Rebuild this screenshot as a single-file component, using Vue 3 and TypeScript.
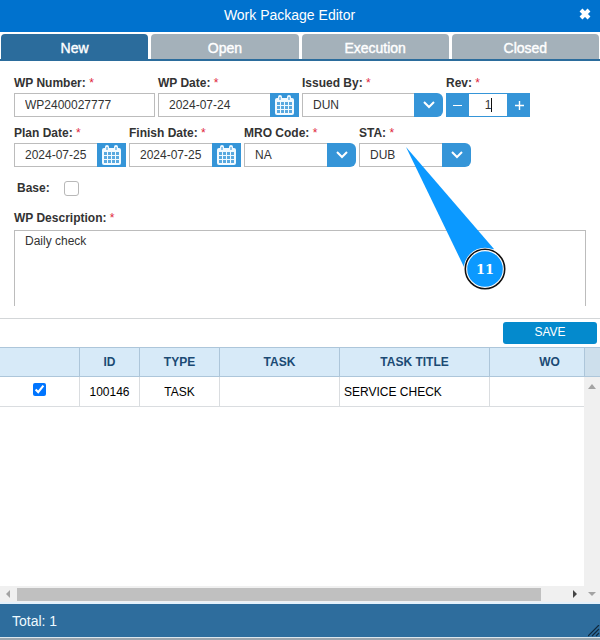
<script setup lang="ts">
import { ref } from 'vue'

interface Field {
  id: string
  label: string
  kind: 'text' | 'date' | 'select' | 'stepper'
  value: string
}

interface Task {
  id: string
  type: string
  task: string
  title: string
  wo: string
  checked: boolean
}

const tabs: string[] = ['New', 'Open', 'Execution', 'Closed']
const activeTab = ref('New')

const rows = ref<Field[][]>([
  [
    { id: 'wp-number', label: 'WP Number:', kind: 'text', value: 'WP2400027777' },
    { id: 'wp-date', label: 'WP Date:', kind: 'date', value: '2024-07-24' },
    { id: 'issued-by', label: 'Issued By:', kind: 'select', value: 'DUN' },
    { id: 'rev', label: 'Rev:', kind: 'stepper', value: '1' },
  ],
  [
    { id: 'plan-date', label: 'Plan Date:', kind: 'date', value: '2024-07-25' },
    { id: 'finish-date', label: 'Finish Date:', kind: 'date', value: '2024-07-25' },
    { id: 'mro-code', label: 'MRO Code:', kind: 'select', value: 'NA' },
    { id: 'sta', label: 'STA:', kind: 'select', value: 'DUB' },
  ],
])

const base = ref(false)
const description = ref('Daily check')

const tasks = ref<Task[]>([
  { id: '100146', type: 'TASK', task: '', title: 'SERVICE CHECK', wo: '', checked: true },
])

function step(field: Field, delta: number): void {
  field.value = String(Math.max(0, Number(field.value) + delta))
}
</script>

<template>
  <main class="editor">
    <header class="titlebar">
      <h1>Work Package Editor</h1>
      <button class="close" type="button" aria-label="Close">
        <svg width="12" height="12" viewBox="0 0 12 12" aria-hidden="true">
          <path d="M2 2L10 10M10 2L2 10" stroke="#fff" stroke-width="4" />
        </svg>
      </button>
    </header>

    <nav class="tabs">
      <button
        v-for="tab in tabs"
        :key="tab"
        type="button"
        class="tab"
        :class="{ active: tab === activeTab }"
        @click="activeTab = tab"
      >{{ tab }}</button>
    </nav>

    <form class="form" @submit.prevent>
      <div v-for="(row, r) in rows" :key="r" class="row" :class="{ compact: r === 1 }">
        <div v-for="field in row" :key="field.id" class="field" :class="field.kind">
          <label :for="field.id">{{ field.label }} <span class="req">*</span></label>
          <div class="control">
            <template v-if="field.kind === 'text'">
              <input :id="field.id" v-model="field.value" type="text" />
            </template>
            <template v-else-if="field.kind === 'date'">
              <input :id="field.id" v-model="field.value" type="text" />
              <button class="addon" type="button" aria-label="Pick date">
                <svg width="19" height="20" viewBox="0 0 19 20" aria-hidden="true">
                  <rect x="0" y="3" width="19" height="17" rx="2" fill="#f2faff" />
                  <rect x="3" y="0" width="4" height="6" rx="2" fill="#f2faff" />
                  <rect x="12" y="0" width="4" height="6" rx="2" fill="#f2faff" />
                  <path d="M5 2V5M14 2V5" stroke="#3595d8" stroke-width="1" />
                  <g fill="#5aa9df">
                    <template v-for="y in 3" :key="y">
                      <rect v-for="x in 4" :key="x" :x="x * 4 - 2" :y="y * 4 + 3" width="3" height="3" />
                    </template>
                  </g>
                </svg>
              </button>
            </template>
            <template v-else-if="field.kind === 'select'">
              <select :id="field.id" v-model="field.value">
                <option :value="field.value">{{ field.value }}</option>
              </select>
              <span class="addon arrow">
                <svg width="12" height="8" viewBox="0 0 12 8" aria-hidden="true">
                  <path d="M1 1L6 6L11 1" fill="none" stroke="#fff" stroke-width="2" />
                </svg>
              </span>
            </template>
            <template v-else>
              <button class="step" type="button" aria-label="Decrease" @click="step(field, -1)">
                <svg width="9" height="9" viewBox="0 0 9 9" aria-hidden="true">
                  <path d="M0 4.5H9" stroke="#fff" />
                </svg>
              </button>
              <input :id="field.id" v-model="field.value" type="text" />
              <span class="caret"></span>
              <button class="step" type="button" aria-label="Increase" @click="step(field, 1)">
                <svg width="9" height="9" viewBox="0 0 9 9" aria-hidden="true">
                  <path d="M0 4.5H9M4.5 0V9" stroke="#fff" stroke-width="1.4" />
                </svg>
              </button>
            </template>
          </div>
        </div>
      </div>

      <div class="base">
        <label for="base">Base:</label>
        <input id="base" v-model="base" type="checkbox" />
      </div>

      <div class="description">
        <label for="description">WP Description: <span class="req">*</span></label>
        <textarea id="description" v-model="description"></textarea>
      </div>
    </form>

    <div class="actions">
      <button class="save" type="button">SAVE</button>
    </div>

    <section class="grid">
      <div class="grid-body">
        <div class="viewport">
          <table>
            <colgroup>
              <col class="c-check" />
              <col class="c-id" />
              <col class="c-type" />
              <col class="c-task" />
              <col class="c-title" />
              <col class="c-wo" />
            </colgroup>
            <thead>
              <tr>
                <th></th>
                <th>ID</th>
                <th>TYPE</th>
                <th>TASK</th>
                <th>TASK TITLE</th>
                <th>WO</th>
              </tr>
            </thead>
            <tbody>
              <tr v-for="task in tasks" :key="task.id">
                <td><input v-model="task.checked" type="checkbox" :aria-label="task.id" /></td>
                <td>{{ task.id }}</td>
                <td>{{ task.type }}</td>
                <td>{{ task.task }}</td>
                <td class="left">{{ task.title }}</td>
                <td>{{ task.wo }}</td>
              </tr>
            </tbody>
          </table>
        </div>
        <div class="vscroll">
          <span class="corner"></span>
          <svg width="8" height="5" viewBox="0 0 8 5" aria-hidden="true"><path d="M0 5L4 0L8 5Z" fill="#a3a3a3" /></svg>
        </div>
      </div>
      <div class="hscroll">
        <svg width="4" height="8" viewBox="0 0 4 8" aria-hidden="true"><path d="M4 0L0 4L4 8Z" fill="#a3a3a3" /></svg>
        <span class="track"><span class="thumb"></span></span>
        <svg width="4" height="8" viewBox="0 0 4 8" aria-hidden="true"><path d="M0 0L4 4L0 8Z" fill="#444" /></svg>
        <svg class="down" width="8" height="4" viewBox="0 0 8 4" aria-hidden="true"><path d="M0 0L4 4L8 0Z" fill="#a3a3a3" /></svg>
      </div>
    </section>

    <footer class="footer">
      <span>Total: {{ tasks.length }}</span>
      <svg class="grip" width="12" height="12" viewBox="0 0 12 12" aria-hidden="true">
        <path d="M0 11L11 0M4 11L11 4M8 11L11 8" stroke="#10283c" stroke-width="1.2" />
      </svg>
    </footer>

    <svg class="callout" width="102" height="146" viewBox="0 0 102 146" role="img" aria-label="Step 11">
      <path d="M1 2L60 124L89 104Z" fill="#0b99ff" />
      <circle cx="80" cy="124" r="19.5" fill="#0b99ff" stroke="#fff" stroke-width="3.4" />
      <circle cx="80" cy="124" r="19.7" fill="none" stroke="#111" stroke-width="1.6" />
      <text x="80" y="129" text-anchor="middle">11</text>
    </svg>
  </main>
</template>

<style>
body {
  margin: 0;
  background: #fff;
}
</style>

<style scoped>
* {
  box-sizing: border-box;
}

.editor {
  position: relative;
  display: flex;
  flex-direction: column;
  min-height: 100vh;
  overflow: hidden;
  font-family: "Liberation Sans", Arial, sans-serif;
  font-size: 12px;
  color: #333;
}

button,
input,
select,
textarea {
  font: inherit;
  color: inherit;
  margin: 0;
}

button {
  border: 0;
  padding: 0;
}

svg {
  display: block;
  flex: none;
}

.titlebar {
  display: flex;
  align-items: flex-start;
  height: 32px;
  padding-right: 9px;
  background: #0072ce;
  color: #fff;
}

.titlebar h1 {
  flex: 1;
  margin: 0;
  font-size: 14px;
  font-weight: 400;
  line-height: 30px;
  text-align: center;
}

.close {
  padding: 8px 0;
  background: none;
}

.tabs {
  display: grid;
  grid-template-columns: repeat(4, 1fr);
  gap: 3px;
  height: 27px;
  margin-top: 2px;
  padding: 0 1px;
  background: linear-gradient(#2b6c9c, #2b6c9c) bottom / 100% 2px no-repeat;
}

.tab {
  height: 25px;
  border-radius: 4px 4px 0 0;
  background: #a4b1ba;
  color: #fff;
  font-size: 14px;
  font-weight: 400;
  line-height: 28px;
  -webkit-text-stroke: 0.4px #fff;
}

.tab.active {
  height: 27px;
  background: #2b6c9c;
}

.form {
  padding: 14px 14px 12px;
  border-bottom: 1px solid #d3d6d8;
}

.row {
  display: flex;
  gap: 3px;
  margin-bottom: 8px;
}

.field {
  width: 141px;
}

.compact .field {
  width: 112px;
}

.field.stepper {
  width: 84px;
}

label {
  display: block;
  font-weight: 700;
  line-height: 18px;
}

.field label {
  line-height: 16px;
  padding-bottom: 2px;
}

.req {
  color: #e0263c;
  font-weight: 400;
}

.control {
  position: relative;
  display: flex;
  height: 24px;
}

.control input,
.control select {
  flex: 1;
  min-width: 0;
  padding: 0 10px;
  border: 1px solid #bcbcbc;
  border-radius: 0;
  background: #fff;
  appearance: none;
  outline: none;
}

.date .control input,
.control select {
  border-right: 0;
}

.stepper .control input {
  padding: 0;
  text-align: center;
  border-color: #3595d8;
}

.addon {
  display: flex;
  flex: none;
  align-items: center;
  justify-content: center;
  width: 29px;
  background: #3595d8;
}

.arrow {
  border-radius: 0 6px 6px 0;
}

.step {
  display: flex;
  flex: none;
  align-items: center;
  justify-content: center;
  width: 22px;
  background: #3595d8;
}

.caret {
  position: absolute;
  left: 45px;
  top: 5px;
  width: 1px;
  height: 14px;
  background: #111;
}

.base {
  display: flex;
  align-items: center;
  gap: 14px;
  margin-top: 12px;
  padding-left: 3px;
}

.base input {
  width: 15px;
  height: 15px;
  border: 1px solid #b8b8b8;
  border-radius: 3px;
  background: #fff;
  appearance: none;
}

.description {
  margin-top: 12px;
}

.description label {
  padding-bottom: 3px;
}

textarea {
  display: block;
  width: 100%;
  height: 76px;
  padding: 3px 10px;
  border: 1px solid #bcbcbc;
  border-bottom: 0;
  line-height: 14px;
  resize: none;
  outline: none;
}

.actions {
  display: flex;
  justify-content: flex-end;
  padding: 3px;
}

.save {
  width: 94px;
  height: 22px;
  border-radius: 3px;
  background: #048acd;
  color: #fff;
  line-height: 18px;
  padding-bottom: 2px;
}

.grid {
  display: flex;
  flex: 1;
  flex-direction: column;
}

.grid-body {
  display: flex;
  flex: 1;
}

.viewport {
  flex: 1;
  min-width: 0;
  overflow: hidden;
}

table {
  width: 610px;
  border-collapse: separate;
  border-spacing: 0;
  table-layout: fixed;
  color: #000;
}

.c-check,
.c-type {
  width: 80px;
}

.c-id {
  width: 60px;
}

.c-task,
.c-wo {
  width: 120px;
}

.c-title {
  width: 150px;
}

th,
td {
  height: 30px;
  padding: 0 4px;
  text-align: center;
  vertical-align: middle;
}

th {
  border: solid #adc6da;
  border-width: 1px 1px 1px 0;
  background: #d7eaf8;
  color: #1b4a74;
  font-weight: 700;
}

td {
  border: solid #dadde0;
  border-width: 0 1px 1px 0;
}

td.left {
  text-align: left;
}

td input {
  display: block;
  width: 13px;
  height: 13px;
  margin: 0 auto 4px;
  accent-color: #0075ff;
}

.vscroll {
  display: flex;
  flex-direction: column;
  align-items: center;
  width: 16px;
  background: #f0f0f0;
}

.corner {
  width: 100%;
  height: 30px;
  margin-bottom: 7px;
  border: solid #adc6da;
  border-width: 1px 0 1px 1px;
  background: #cddfec;
}

.hscroll {
  display: flex;
  align-items: center;
  height: 18px;
  padding: 0 4px 0 6px;
  border-bottom: 2px solid #e4f1fb;
  background: #f0f0f0;
}

.track {
  flex: 1;
  height: 13px;
  margin: 1px 4px 0 7px;
}

.thumb {
  display: block;
  width: 95%;
  height: 100%;
  background: #c0c0c0;
}

.down {
  margin-left: 11px;
}

.footer {
  display: flex;
  align-items: center;
  justify-content: space-between;
  height: 36px;
  padding-left: 12px;
  border-bottom: 2px solid #9aa5ae;
  background: #2e6d9d;
  box-shadow: inset 0 -1px #dce6ed;
  color: #eefaff;
  font-size: 14px;
}

.grip {
  align-self: flex-end;
  margin-bottom: 1px;
}

.callout {
  position: absolute;
  left: 405px;
  top: 145px;
  pointer-events: none;
}

.callout text {
  fill: #fff;
  font-family: "DejaVu Serif", serif;
  font-size: 13px;
  font-weight: 700;
}
</style>
